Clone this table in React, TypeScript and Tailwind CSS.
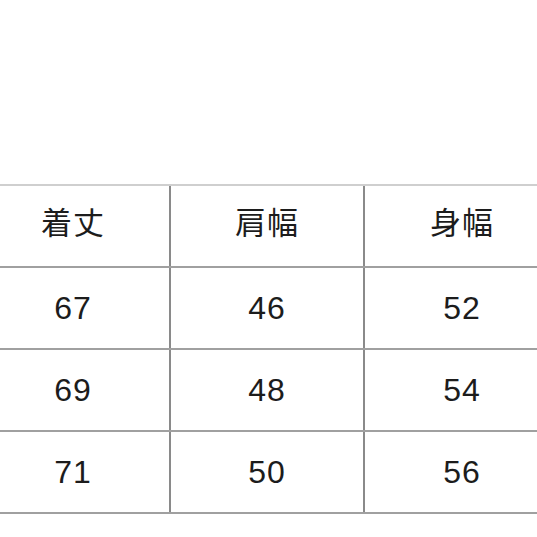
const header = ['着丈', '肩幅', '身幅'];
const rows = [
  ['67', '46', '52'],
  ['69', '48', '54'],
  ['71', '50', '56'],
];

export default function App() {
  return (
    <div className="h-[537px] w-[537px] overflow-hidden bg-white pt-[184px]">
      <div className="ml-[-23px] w-[584px] border-t-2 border-[#cfcfcf]">
        {[header, ...rows].map((row, i) => (
          <div key={i} className="flex h-[82px] border-b-2 border-[#a0a0a0]">
            {row.map((cell, j) => (
              <div
                key={j}
                className={`flex w-[194px] items-center justify-center ${j < 2 ? 'border-r-2 border-[#8a8a8a]' : ''} ${
                  i === 0
                    ? "pb-[10px] text-[31px] font-['Noto_Sans_CJK_JP',sans-serif] tracking-[1px]"
                    : "text-[32px] font-['Liberation_Sans',Arial,sans-serif] tracking-[1px]"
                } text-[#1c1c1c]`}
              >
                {cell}
              </div>
            ))}
          </div>
        ))}
      </div>
    </div>
  );
}
